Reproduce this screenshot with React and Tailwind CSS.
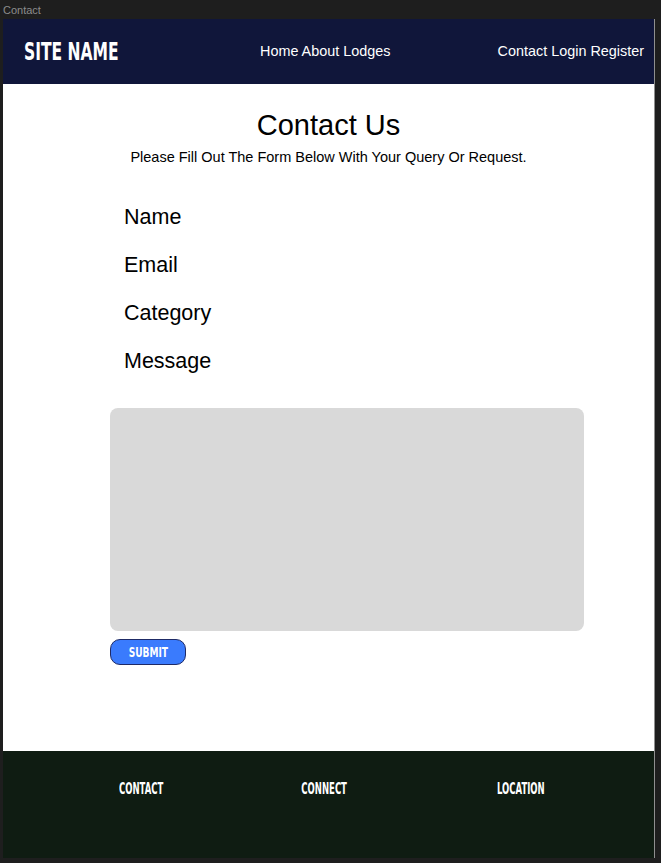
const condensed = { fontFamily: '"DejaVu Sans Condensed", "DejaVu Sans", sans-serif' };

const Label = ({ children }) => (
    <div className="text-[21.5px] leading-[24px] text-black">{children}</div>
);

const App = () => {
    return (
        <div className="bg-[#1e1e1e] h-[863px] w-[661px] overflow-hidden font-['Liberation_Sans',Arial,sans-serif]">
            <div className="h-[19px] pl-[3px] pt-[4px] text-[11px] leading-[13px] text-[#8c8c8c]">Contact</div>

            <div className="ml-[3px] w-[652px] border-r border-[#8f8f8f] flex flex-col">
                {/* Header */}
                <header className="h-[65px] bg-[#10163a] flex items-center text-white">
                    <div className="w-[257px] pl-[21px] h-[65px] flex items-center">
                        <span className="inline-block text-[25px] font-bold leading-none origin-left scale-x-[0.69] whitespace-nowrap" style={condensed}>
                            SITE NAME
                        </span>
                    </div>
                    <nav className="text-[14.4px] leading-[18px] -mt-[2px]">Home About Lodges</nav>
                    <nav className="ml-auto pr-[10px] text-[14.4px] leading-[18px] -mt-[2px]">Contact Login Register</nav>
                </header>

                {/* Form */}
                <main className="h-[667px] bg-white flex flex-col">
                    <h1 className="pt-[24px] text-center text-[29px] leading-[34px] text-black">Contact Us</h1>
                    <p className="mt-[6px] text-center text-[14.5px] leading-[18px] text-black">Please Fill Out The Form Below With Your Query Or Request.</p>

                    <div className="mt-[39px] ml-[121px] flex flex-col gap-[24px]">
                        <Label>Name</Label>
                        <Label>Email</Label>
                        <Label>Category</Label>
                        <Label>Message</Label>
                    </div>

                    <div className="mt-[35px] ml-[107px] w-[474px] h-[223px] bg-[#d9d9d9] rounded-[8px]"></div>

                    <button className="mt-[8px] ml-[107px] w-[76px] h-[26px] bg-[#3a7bfd] border border-[#1e2a66] rounded-[10px] flex items-center justify-center">
                        <span className="inline-block text-white text-[14px] font-bold leading-none scale-x-[0.72] whitespace-nowrap" style={condensed}>
                            SUBMIT
                        </span>
                    </button>
                </main>

                {/* Footer */}
                <footer className="h-[107px] bg-[#0f1c12] text-white flex items-start pt-[30px]">
                    <div className="ml-[113px] w-[50px] flex justify-center">
                        <span className="inline-block text-[15px] font-bold leading-[16px] scale-x-[0.63] whitespace-nowrap" style={condensed}>CONTACT</span>
                    </div>
                    <div className="ml-[133px] w-[50px] flex justify-center">
                        <span className="inline-block text-[15px] font-bold leading-[16px] scale-x-[0.63] whitespace-nowrap" style={condensed}>CONNECT</span>
                    </div>
                    <div className="ml-[147px] w-[50px] flex justify-center">
                        <span className="inline-block text-[15px] font-bold leading-[16px] scale-x-[0.63] whitespace-nowrap" style={condensed}>LOCATION</span>
                    </div>
                </footer>
            </div>
        </div>
    );
};

export default App;
